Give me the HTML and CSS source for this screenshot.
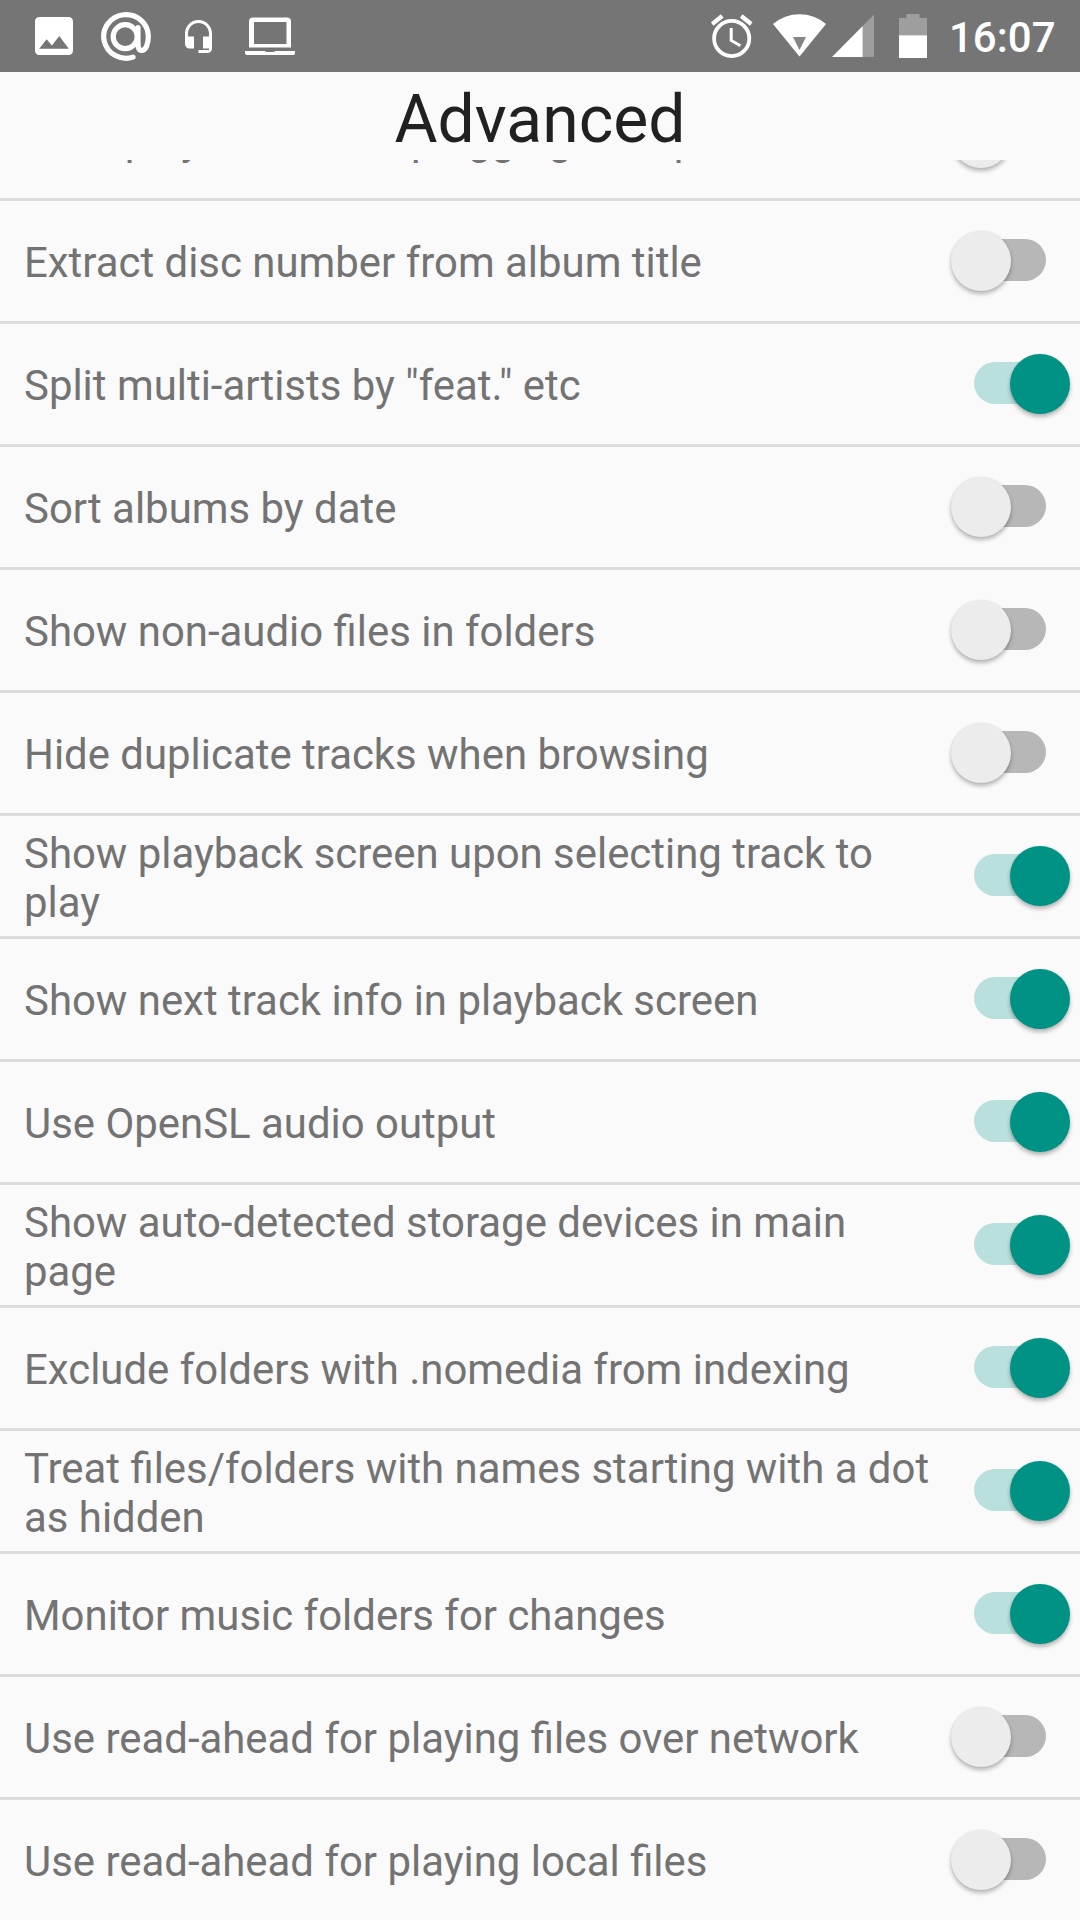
FILE: index.html
```html
<!DOCTYPE html>
<html lang="en">
<head>
    <meta charset="UTF-8">
    <meta name="viewport" content="width=device-width, initial-scale=1.0">
    <title>Advanced</title>
    <link rel="stylesheet" href="styles.css">
</head>
<body>

<div class="status-bar">
    <svg class="icon-image" width="38" height="38" viewBox="3 3 18 18">
        <path d="M21 19V5c0-1.1-.9-2-2-2H5c-1.1 0-2 .9-2 2v14c0 1.1.9 2 2 2h14c1.1 0 2-.9 2-2zM8.5 13.5l2.5 3.01L14.5 12l4.5 6H5l3.5-4.5z"/>
    </svg>
    <svg class="icon-mail" width="50" height="72" viewBox="0 0 50 72">
        <g fill="none" stroke="#fff" stroke-width="5.2" stroke-linecap="round">
            <circle cx="24.2" cy="36.7" r="12"/>
            <path d="M37 27.5V43.5C37 48.5 38.5 50.5 40.5 50.5C44.8 50.5 47.3 44 47.3 36.5A22.3 21.8 0 1 0 32 57.1"/>
        </g>
    </svg>
    <svg class="icon-headset" width="27" height="33" viewBox="3 1 18 22">
        <path d="M12 1c-4.97 0-9 4.03-9 9v7c0 1.66 1.34 3 3 3h3v-8H5v-2c0-3.87 3.13-7 7-7s7 3.13 7 7v2h-4v8h4v1h-7v2h6c1.66 0 3-1.34 3-3V10c0-4.97-4.03-9-9-9z"/>
    </svg>
    <svg class="icon-laptop" width="50" height="72" viewBox="0 0 50 72">
        <path fill-rule="evenodd" d="M8 17.5h34q4 0 4 4v26H4v-26q0-4 4-4zM9 22v22h32.5v-22z"/>
        <path d="M0 51h20q0 1 2 1h6q2 0 2-1h20v2q0 2-2 2H2q-2 0-2-2z"/>
    </svg>

    <svg class="icon-alarm" width="42" height="72" viewBox="0 0 42 72">
        <g fill="none" stroke="#fff">
            <circle cx="20.7" cy="38.5" r="17.6" stroke-width="3.8"/>
            <path d="M20.2 28v12.5l9.2 5.3" stroke-width="3"/>
            <path d="M1.2 24l10-8M40.2 24l-10-8" stroke-width="4.2"/>
        </g>
    </svg>
    <svg class="icon-wifi" width="53" height="72" viewBox="0 0 53 72">
        <path d="M0 24Q11.5 14.2 26.5 14.2T53 24L26.5 56.5z"/>
        <path class="wifi-mark" d="M20 37h13l-6.5 13z"/>
    </svg>
    <svg class="icon-signal" width="42" height="72" viewBox="0 0 42 72">
        <path class="faded" d="M42 14.5V57H30.7V26z"/>
        <path d="M0 57L30.7 26V57z"/>
    </svg>
    <svg class="icon-battery" width="28" height="72" viewBox="0 0 28 72">
        <path class="faded" d="M7.3 14h13.2v4H28v17.5H0V18h7.3z"/>
        <path d="M0 35.3h28V58H0z"/>
    </svg>
    <span class="clock">16:07</span>
</div>

<h1>Advanced</h1>

<div class="list">
    <div class="settings">
        <div class="row"><span class="label">Start playback when plugging headphones</span><span class="switch"></span></div>
        <div class="row"><span class="label">Extract disc number from album title</span><span class="switch"></span></div>
        <div class="row"><span class="label">Split multi-artists by "feat." etc</span><span class="switch on"></span></div>
        <div class="row"><span class="label">Sort albums by date</span><span class="switch"></span></div>
        <div class="row"><span class="label">Show non-audio files in folders</span><span class="switch"></span></div>
        <div class="row"><span class="label">Hide duplicate tracks when browsing</span><span class="switch"></span></div>
        <div class="row"><span class="label">Show playback screen upon selecting track to play</span><span class="switch on"></span></div>
        <div class="row"><span class="label">Show next track info in playback screen</span><span class="switch on"></span></div>
        <div class="row"><span class="label">Use OpenSL audio output</span><span class="switch on"></span></div>
        <div class="row"><span class="label">Show auto-detected storage devices in main page</span><span class="switch on"></span></div>
        <div class="row"><span class="label">Exclude folders with .nomedia from indexing</span><span class="switch on"></span></div>
        <div class="row"><span class="label">Treat files/folders with names starting with a dot as hidden</span><span class="switch on"></span></div>
        <div class="row"><span class="label">Monitor music folders for changes</span><span class="switch on"></span></div>
        <div class="row"><span class="label">Use read-ahead for playing files over network</span><span class="switch"></span></div>
        <div class="row"><span class="label">Use read-ahead for playing local files</span><span class="switch"></span></div>
    </div>
</div>

</body>
</html>
```
FILE: styles.css
```css
* {
    box-sizing: border-box;
}
body {
    margin: 0;
    width: 1080px;
    height: 1920px;
    overflow: hidden;
    display: flex;
    flex-direction: column;
    background: #fafafa;
    font-family: Roboto, sans-serif;
}

/* status bar */
.status-bar {
    display: flex;
    align-items: center;
    height: 72px;
    flex: none;
    padding: 0 25px 0 35px;
    background: #757575;
}
.status-bar svg {
    flex: none;
    fill: #fff;
}
.icon-mail { margin-left: 28px; }
.icon-headset { margin-left: 34px; }
.icon-laptop { margin-left: 33px; }
.icon-alarm { margin-left: auto; }
.icon-wifi { margin-left: 20px; }
.icon-signal { margin-left: 6px; }
.icon-battery { margin-left: 25px; }
.status-bar .faded { fill: #9e9e9e; }
.status-bar .wifi-mark { fill: #858585; }
.clock {
    width: 106px;
    margin-left: 22px;
    padding-top: 3px;
    color: #fff;
    font-size: 42px;
    font-weight: 500;
    line-height: 49px;
}

h1 {
    flex: none;
    height: 88px;
    margin: 0;
    padding-top: 9px;
    color: #212121;
    font-size: 66px;
    font-weight: 400;
    line-height: 78px;
    text-align: center;
}

/* list, scrolled so the first row is mostly under the title */
.list {
    flex: 1;
    overflow: hidden;
}
.settings {
    margin-top: -82px;
}
.row {
    display: flex;
    align-items: center;
    justify-content: space-between;
    height: 123px;
    padding: 0 10px 0 24px;
    border-bottom: 3px solid #dcdcdc;
}
.label {
    width: 916px;
    padding-top: 3px;
    color: #737373;
    font-size: 41.92px;
    line-height: 49px;
}

.switch {
    display: flex;
    align-items: center;
    width: 120px;
    height: 60px;
    margin-bottom: 2px;
}
.switch::before {
    content: "";
    width: 72px;
    height: 42px;
    margin-left: 24px;
    border-radius: 21px;
    background: #b7b7b7;
}
.switch::after {
    content: "";
    width: 60px;
    height: 60px;
    margin-top: 1px;
    margin-left: -95.5px;
    border-radius: 50%;
    background: #ececec;
    box-shadow: 0 3px 4px rgba(0, 0, 0, 0.28), 0 0 2px rgba(0, 0, 0, 0.08);
}
.switch.on::before {
    background: #b9e0dc;
}
.switch.on::after {
    margin-left: -36.5px;
    background: #009285;
}
```
